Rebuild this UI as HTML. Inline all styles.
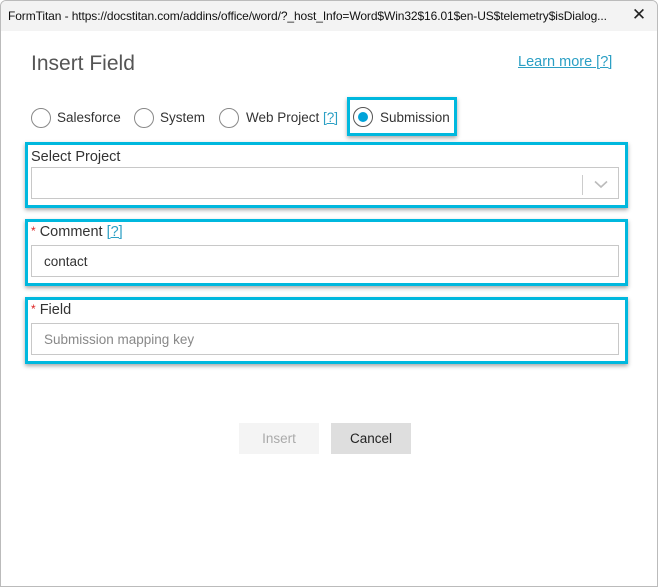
<!DOCTYPE html>
<html><head><meta charset="utf-8"><style>
*{box-sizing:border-box;margin:0;padding:0}
body{width:658px;height:587px;overflow:hidden;background:#fff;font-family:"Liberation Sans",sans-serif;position:relative;color:#333}
.win{position:absolute;left:0;top:0;width:658px;height:587px;border:1px solid #bbb;border-radius:6px 6px 0 0;background:#fff;overflow:hidden}
.in0{position:absolute;left:-1px;top:-1px;width:658px;height:587px}
.tb{position:absolute;left:0;top:0;width:658px;height:31px;background:#f3f3f3;font-size:12px;color:#111;padding:9px 0 0 8px;white-space:nowrap;letter-spacing:-0.1px}
.x{position:absolute;right:12px;top:5px;font-size:17px;color:#222}
h1{position:absolute;left:31px;top:52px;font-size:21px;font-weight:normal;color:#555}
.lm{position:absolute;left:518px;top:54px;font-size:14.5px;color:#2b9fc4;text-decoration:underline}
.r{position:absolute;top:108px;width:20px;height:20px;border:1px solid #888;border-radius:50%}
.rl{position:absolute;top:110px;font-size:13.5px;color:#333}
.q{color:#2b9fc4;text-decoration:underline}
.hl{position:absolute;border:3px solid #00b8de;box-shadow:0 2px 4px rgba(0,0,0,.35)}
.lab{position:absolute;left:31px;font-size:14.5px;color:#333}
.st{color:#d22;font-size:12px;vertical-align:top}
.in{position:absolute;left:31px;width:588px;height:32px;border:1px solid #c8c8c8;font-size:13.5px;padding:8px 0 0 12px}
.btn{position:absolute;top:423px;width:80px;height:31px;font-size:13.5px;text-align:center;line-height:31px}
</style></head><body><div class="win"><div class="in0">
<div class="tb">FormTitan - https://docstitan.com/addins/office/word/?_host_Info=Word$Win32$16.01$en-US$telemetry$isDialog...<span class="x">✕</span></div>
<h1>Insert Field</h1>
<div class="lm">Learn more [?]</div>
<div class="r" style="left:31px"></div><div class="rl" style="left:57px">Salesforce</div>
<div class="r" style="left:134px"></div><div class="rl" style="left:160px">System</div>
<div class="r" style="left:219px"></div><div class="rl" style="left:246px">Web Project <span class="q">[?]</span></div>
<div class="hl" style="left:347px;top:97px;width:110px;height:39px"></div>
<div class="r" style="left:353px;top:107px;border-color:#555"><div style="position:absolute;left:4px;top:4px;width:10px;height:10px;border-radius:50%;background:#00a3d9"></div></div>
<div class="rl" style="left:380px">Submission</div>

<div class="hl" style="left:25px;top:142px;width:603px;height:66px"></div>
<div class="lab" style="top:149px">Select Project</div>
<div class="in" style="top:167px"><div style="position:absolute;left:550px;top:7px;width:1px;height:20px;background:#ccc"></div>
<svg style="position:absolute;left:562px;top:12px" width="14" height="9" viewBox="0 0 14 9"><path d="M1 1.5 7 7 13 1.5" fill="none" stroke="#bbb" stroke-width="1.6"/></svg></div>

<div class="hl" style="left:25px;top:219px;width:603px;height:67px"></div>
<div class="lab" style="top:224px"><span class="st">*</span> Comment <span class="q">[?]</span></div>
<div class="in" style="top:245px;color:#333">contact</div>

<div class="hl" style="left:25px;top:297px;width:603px;height:67px"></div>
<div class="lab" style="top:302px"><span class="st">*</span> Field</div>
<div class="in" style="top:323px;color:#888">Submission mapping key</div>

<div class="btn" style="left:239px;background:#f4f4f4;color:#aaa">Insert</div>
<div class="btn" style="left:331px;background:#dedede;color:#222">Cancel</div>
</div></div></body></html>
